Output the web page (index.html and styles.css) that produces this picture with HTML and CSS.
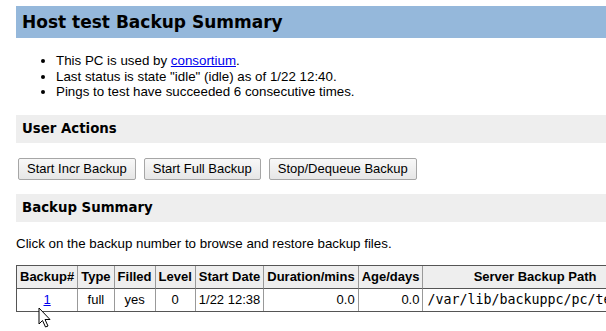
FILE: index.html
```html
<!DOCTYPE html>
<html lang="en">
<head>
  <meta charset="UTF-8">
  <title>BackupPC: Host test Backup Summary</title>
  <link rel="stylesheet" href="styles.css">
</head>
<body>
  <div class="contenido">
    <div class="h1">Host test Backup Summary</div>

    <ul class="estado">
      <li>This PC is used by <a href="#">consortium</a>.</li>
      <li>Last status is state "idle" (idle) as of 1/22 12:40.</li>
      <li>Pings to test have succeeded 6 consecutive times.</li>
    </ul>

    <div class="h2">User Actions</div>
    <div class="acciones">
      <button class="boton">Start Incr Backup</button>
      <button class="boton">Start Full Backup</button>
      <button class="boton">Stop/Dequeue Backup</button>
    </div>

    <div class="h2">Backup Summary</div>
    <p class="nota">Click on the backup number to browse and restore backup files.</p>

    <table class="tabla">
      <thead>
        <tr>
          <th>Backup#</th>
          <th>Type</th>
          <th>Filled</th>
          <th>Level</th>
          <th>Start Date</th>
          <th>Duration/mins</th>
          <th>Age/days</th>
          <th class="ultima">Server Backup Path</th>
        </tr>
      </thead>
      <tbody>
        <tr>
          <td class="centro"><a href="#">1</a></td>
          <td class="centro">full</td>
          <td class="centro">yes</td>
          <td class="centro">0</td>
          <td>1/22 12:38</td>
          <td class="derecha">0.0</td>
          <td class="derecha">0.0</td>
          <td class="ruta ultima">/var/lib/backuppc/pc/test/1</td>
        </tr>
      </tbody>
    </table>

    <!-- puntero del ratón -->
    <svg class="puntero" width="14" height="22" viewBox="0 0 14 22">
      <path d="M1 1 L1 17 L4.5 13.5 L7.5 20 L10 19 L7 12.5 L12 12.5 Z" fill="#fff" stroke="#000" stroke-width="1" stroke-linejoin="miter"/>
    </svg>
  </div>
</body>
</html>
```

FILE: styles.css
```css
/* Reset y estilos globales */
* {
  margin: 0;
  padding: 0;
  box-sizing: border-box;
}

html {
  overflow: hidden;
}

body {
  background: #fff;
  color: #000;
  font-family: "Liberation Sans", Arial, sans-serif;
  font-size: 13.33px;
  min-height: 331px;
}

.contenido {
  position: relative;
  width: 720px;
  padding: 6px 0 0 16px;
}

/* Cabeceras */
.h1 {
  background-color: #95b8db;
  font-family: "DejaVu Sans", Verdana, sans-serif;
  font-weight: bold;
  font-size: 17px;
  line-height: 20px;
  padding: 6px 6px;
}

.h2 {
  background-color: #eeeeee;
  font-family: "DejaVu Sans", Verdana, sans-serif;
  font-weight: bold;
  font-size: 13.33px;
  line-height: 16px;
  padding: 6px 6px;
}

/* Lista de estado */
.estado {
  margin: 15px 0 15px;
  padding-left: 40px;
  line-height: 15.5px;
}

a {
  color: #0000ee;
}

/* Botones */
.acciones {
  display: flex;
  gap: 8px;
  margin: 15px 0 14px 2px;
}

.boton {
  font-family: "Liberation Sans", Arial, sans-serif;
  font-size: 13px;
  line-height: 16px;
  padding: 2px 8px;
  color: #000;
  background: linear-gradient(#f8f8f8, #e6e6e6);
  border: 1px solid #a6a6a6;
  border-radius: 2px;
}

.nota {
  margin: 14px 0 13px;
  line-height: 16px;
}

/* Tabla de copias */
.tabla {
  border-collapse: separate;
  border-spacing: 0;
  border: 1px solid #555;
  font-size: 13px;
}

.tabla th,
.tabla td {
  padding: 3px;
  line-height: 16px;
  border-right: 1px solid #999;
  white-space: nowrap;
}

.tabla th {
  background-color: #eeeeee;
  border-bottom: 1px solid #555;
  text-align: center;
}

.tabla .ultima {
  border-right: none;
}

.centro {
  text-align: center;
}

.derecha {
  text-align: right;
}

.ruta {
  font-family: "DejaVu Sans Mono", monospace;
  font-size: 13.3px;
  padding-left: 4px !important;
}

.puntero {
  position: absolute;
  left: 38px;
  top: 307px;
}
```
